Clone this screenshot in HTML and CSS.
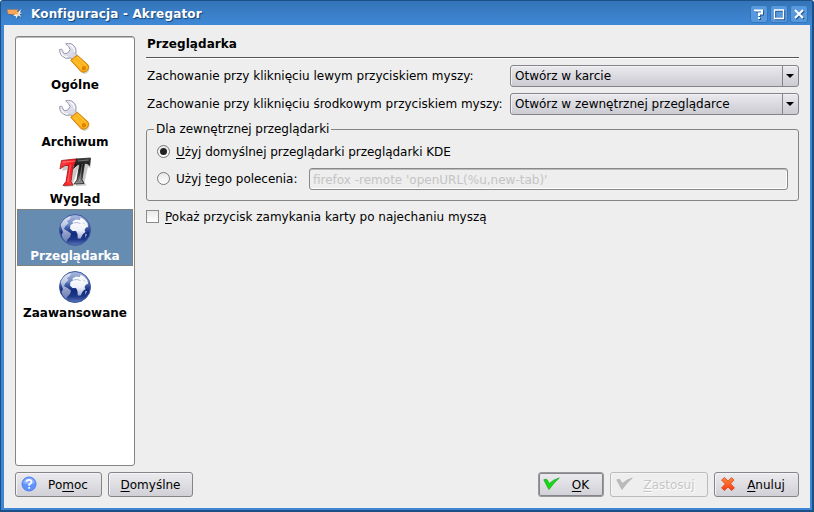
FILE: index.html
```
<!DOCTYPE html>
<html lang="pl">
<head>
<meta charset="utf-8">
<title>Konfiguracja - Akregator</title>
<link rel="stylesheet" href="styles.css">
</head>
<body>
<svg class="defs" width="0" height="0" aria-hidden="true">
  <defs>
    <linearGradient id="gold" x1="0" y1="1" x2="1" y2="0"><stop offset="0" stop-color="#f08a00"/><stop offset=".5" stop-color="#ffb820"/><stop offset="1" stop-color="#f09000"/></linearGradient>
    <linearGradient id="steel" x1="0" y1="0" x2="1" y2="1"><stop offset="0" stop-color="#f4f4fa"/><stop offset="1" stop-color="#c9cad9"/></linearGradient>
    <linearGradient id="sea" x1="0" y1="0" x2="0" y2="1"><stop offset="0" stop-color="#a4b4de"/><stop offset=".4" stop-color="#4a68b0"/><stop offset=".6" stop-color="#122a7c"/><stop offset=".8" stop-color="#1c3888"/><stop offset="1" stop-color="#5c78bb"/></linearGradient>
    <linearGradient id="land" x1="0" y1="0" x2="0" y2="1"><stop offset="0" stop-color="#fff"/><stop offset=".6" stop-color="#eef1fa"/><stop offset="1" stop-color="#9dabd4"/></linearGradient>
    <linearGradient id="red" x1="0" y1="0" x2="1" y2="1"><stop offset="0" stop-color="#ff5050"/><stop offset=".5" stop-color="#fa1820"/><stop offset="1" stop-color="#ff5a5a"/></linearGradient>
    <linearGradient id="black" x1="0" y1="0" x2="0" y2="1"><stop offset="0" stop-color="#444"/><stop offset=".3" stop-color="#111"/><stop offset=".6" stop-color="#333"/><stop offset="1" stop-color="#999"/></linearGradient>
    <linearGradient id="cross" x1="0" y1="0" x2="0" y2="1"><stop offset="0" stop-color="#ff8a3c"/><stop offset="1" stop-color="#fa3a10"/></linearGradient>
    <symbol id="wrench" viewBox="1 1 31.500 31.500">
      <path d="M15 19 20 14.500 30.500 24.500Q32 27 30 29.500 27 32.500 24.500 31Z" fill="#999" opacity=".4"/>
      <path d="M7.500 1.800Q10 .8 13 1.800 17.500 4 17.800 8.500L17.500 12 20.500 15 16 18.500 12.500 15.800Q7.500 17.500 3.500 13.500 1.500 11 1.500 7.500L3.500 7 6 11.500 9.500 11 12 7.500 10.500 4.500Z" fill="url(#steel)" stroke="#9090a6" stroke-width=".9"/>
      <path d="M3 10Q5 15 10 14.800M12 3Q16 5 16.300 10" fill="none" stroke="#fff" stroke-width="1"/>
      <path d="M12.500 18 19 13 29.500 22.500Q31.300 25 29 28 26.500 30.500 23 29.500Z" fill="url(#gold)" stroke="#c97800" stroke-width=".9"/>
      <path d="M15.500 18 24 27M19 15 27.500 23" stroke="#ffc840" stroke-width="1"/>
      <circle cx="25.500" cy="25.800" r="1.700" fill="#e58a00" stroke="#c26c00" stroke-width=".6"/>
    </symbol>
    <symbol id="fonts" viewBox="0 0 32 32">
      <path d="M3.500 6 20 5 19 12 14 26 15.500 29 5 30 8 25 11 12 3.500 14ZM20 5 32 4 31.500 11 29 10 25.500 25 27.500 28.500 17 29Z" fill="#666" opacity=".35"/>
      <path d="M2.500 3.500 18 1.800 16.800 9.500 14.300 7.500 12 24.500 14 28 4 28.500 7 24.500 9.700 8.500 6 8.500 1 12Z" fill="url(#red)" stroke="#a01010" stroke-width=".8"/>
      <path d="M17.500 2 31.500 1 30.500 8.500 28 6.500 25.500 6.500 23 22.500 25 26.500 15 27 18 23 20.700 7.500 18 8 14.500 11.500Z" fill="url(#black)" stroke="#222" stroke-width=".8"/>
      <path d="M4 5.200 16.500 4M11.500 8 8.800 25M19 4 29.500 3M23.300 7 20.500 24" stroke="#fff" stroke-width=".8" opacity=".4"/>
    </symbol>
    <symbol id="globe" viewBox="0 0 32 32">
      <circle cx="16" cy="16" r="15.500" fill="url(#sea)" stroke="#3f5a9c" stroke-width="1"/>
      <path d="M1.500 11Q4 5 9 3L12 2.500 11 5 8 7 9.500 9 6.500 12 5 15 8.500 17 12 19.500 11 23 8 26 7.500 28Q4 26 2.500 21L4 18Z" fill="url(#land)" opacity=".6"/>
      <path d="M13.500 7.500 17 5.500 21 6 21.500 3.800 25 5.500 28.500 9.500 29 13 27 13.500 25.500 16 26.500 18 24 20 21.500 24.500 18.800 24.500 18.500 20 17 17 13.500 17 11 14.500 11.500 11 14 9.500Z" fill="url(#land)"/>
      <path d="M14.500 9 18 8.500 21.500 9.500M24 8.500 26 10.500" stroke="#a3b3da" stroke-width="1" fill="none"/>
      <path d="M26.500 19.500 28 20.500 26 24Z" fill="#b0bce0"/>
      <path d="M2 11Q6 1.500 16 1.300 26 1.500 30 11 22 15 16 13 8 12 2 11Z" fill="#fff" opacity=".12"/>
    </symbol>
    <symbol id="check" viewBox="0 0 17 14">
      <path d="M.8 2.800 3.700 2.300 6.300 6.500Q10 2.700 16.300 1 11 5.300 6 12.500L4.800 10.500Z"/>
    </symbol>
  </defs>
</svg>
<div class="window">
  <header class="titlebar">
    <svg class="app-icon" width="16" height="12" viewBox="0 0 16 12">
      <path d="M0 1.500 11 1.500 9.500 7 1 6Z" fill="#f38a2c"/><path d="M1 3 10 3M1.500 5 8 5" stroke="#ffc890" stroke-width=".9"/>
      <path d="M10 4 11 4 14.500 1 13 4.500 15.500 5 12.500 6 14.500 9 11 7.500 9.500 10.500 8.500 8 6 8 8 6.500Z" fill="#eeeae2"/>
      <path d="M8 4 12 4.500 10 7Z" fill="#f7a850"/>
    </svg>
    <h1 class="title">Konfiguracja - Akregator</h1>
    <div class="controls">
      <svg class="control" width="18" height="18" viewBox="0 0 16 16"><g class="glyph"><path d="M4 5V4.500H11V7.500H8V10M8 11V13"/></g></svg>
      <svg class="control" width="18" height="18" viewBox="0 0 16 16"><g class="glyph thin"><path d="M3.500 4H12.500V12.500H3.500Z"/></g></svg>
      <svg class="control" width="18" height="18" viewBox="0 0 16 16"><g class="glyph"><path d="M4 4 12 12M12 4 4 12"/></g></svg>
    </div>
  </header>
  <main class="body">
    <div class="content">
      <nav class="sidebar">
        <div class="item"><svg class="pic"><use href="#wrench"/></svg><span>Ogólne</span></div>
        <div class="item"><svg class="pic"><use href="#wrench"/></svg><span>Archiwum</span></div>
        <div class="item"><svg class="pic"><use href="#fonts"/></svg><span>Wygląd</span></div>
        <div class="item selected"><svg class="pic"><use href="#globe"/></svg><span>Przeglądarka</span></div>
        <div class="item"><svg class="pic"><use href="#globe"/></svg><span>Zaawansowane</span></div>
      </nav>
      <section class="page">
        <h2 class="heading">Przeglądarka</h2>
        <div class="row"><span class="label">Zachowanie przy kliknięciu lewym przyciskiem myszy:</span><div class="combo"><span class="value">Otwórz w karcie</span><span class="drop"></span></div></div>
        <div class="row"><span class="label">Zachowanie przy kliknięciu środkowym przyciskiem myszy:</span><div class="combo"><span class="value">Otwórz w zewnętrznej przeglądarce</span><span class="drop"></span></div></div>
        <fieldset class="group">
          <legend>Dla zewnętrznej przeglądarki</legend>
          <div class="option"><span class="radio on"></span><span class="default-label"><u>U</u>żyj domyślnej przeglądarki przeglądarki KDE</span></div>
          <div class="option second"><span class="radio"></span><span class="command-label">Użyj <u>t</u>ego polecenia:</span><div class="field">firefox -remote 'openURL(%u,new-tab)'</div></div>
        </fieldset>
        <div class="check-row"><span class="checkbox"></span><span><u>P</u>okaż przycisk zamykania karty po najechaniu myszą</span></div>
      </section>
    </div>
    <footer class="buttons">
      <div class="button help"><svg width="16" height="16" viewBox="0 0 16 16"><circle cx="8" cy="8" r="7" fill="#5f92fa" stroke="#4f80ee"/><path d="M2 7Q3 2 8 2T14 7Q8 10 2 7" fill="#a9c6ff" opacity=".6"/><path d="M5.500 6Q5.500 3.800 8 3.800T10.500 6Q10.500 7.200 8.200 8.500V9.700M8.200 11V12.800" fill="none" stroke="#fff" stroke-width="1.800"/></svg><span>Po<u>m</u>oc</span></div>
      <div class="button defaults"><span><u>D</u>omyślne</span></div>
      <div class="button ok"><svg width="17" height="14" fill="#12dc12" stroke="#16a016" stroke-width=".7"><use href="#check"/></svg><span><u>O</u>K</span></div>
      <div class="button apply"><svg width="17" height="14" fill="#bbb" stroke="#aaa" stroke-width=".6"><use href="#check"/></svg><span><u>Z</u>astosuj</span></div>
      <div class="button cancel"><svg width="16" height="16" viewBox="0 0 16 16"><path d="M1.500 4 4.500 1.500 8 5 11.500 1.500 14 4 10.700 7.700 14.500 12 11.500 14.500 8 11 4.500 14.500 1.500 12 5.300 8Z" fill="url(#cross)" stroke="#d83810" stroke-width=".7"/></svg><span><u>A</u>nuluj</span></div>
    </footer>
  </main>
</div>
</body>
</html>
```
FILE: styles.css
```
* { box-sizing: border-box; }
body { margin: 0; background: #fff; color: #000; font: 12px/16px "DejaVu Sans", sans-serif; white-space: nowrap; overflow: hidden; }
.defs { display: block; height: 0; }
.window { width: 814px; height: 512px; display: flex; flex-direction: column; background: #3f87d4; border: 1px solid #1c4f86; border-right-width: 2px; border-bottom-width: 2px; border-radius: 3px 3px 0 0; padding: 0 2px 2px 3px; }
.titlebar { height: 24px; flex: none; display: flex; align-items: center; margin: 0 -2px 0 -3px; padding: 0 4px 0 6px; background: linear-gradient(#3474b8, #3f88d6); border-radius: 2px 2px 0 0; }
.app-icon { margin-top: 1px; filter: drop-shadow(1px 1px 0 #2868ac); }
.title { margin: 2px 0 0 8px; font-size: 12px; letter-spacing: .16px; line-height: 16px; color: #fff; text-shadow: 1px 1px 1px #184478; }
.controls { margin: 2px 0 0 auto; display: flex; gap: 2px; }
.control { width: 18px; height: 18px; border: 1px solid #3474b8; border-radius: 3px; background: #5898dc; }
.glyph { fill: none; stroke: #fff; stroke-width: 2; filter: drop-shadow(1px 1px 0 #1f5592); }
.glyph.thin { stroke-width: 1.3; }
.body { flex: 1; display: flex; flex-direction: column; background: #eee; padding: 11px 11px 0; }
.content { display: flex; height: 430px; }
.sidebar { width: 120px; flex: none; background: #fff; border: 1px solid #858585; border-radius: 3px; padding: 1px; box-shadow: inset 0 1px #bbb; }
.item { height: 57px; padding: 5px 0 0; display: flex; flex-direction: column; align-items: center; font-weight: bold; }
.pic { width: 32px; height: 32px; margin-bottom: 2px; }
.selected { background: #678cb2; color: #fff; outline: 1px dotted #98734d; outline-offset: -1px; }
.page { flex: 1; margin-left: 11px; }
.heading { height: 22px; margin: 0 0 7px; padding-left: 1px; font-size: 12px; letter-spacing: .05px; line-height: 16px; border-bottom: 1px solid #555; box-shadow: 0 1px #fff; }
.row { display: flex; align-items: center; justify-content: space-between; height: 22px; margin-bottom: 6px; padding-left: 1px; }
.combo { width: 289px; height: 22px; border: 1px solid #858589; border-radius: 3px; display: flex; background: linear-gradient(#eaeaee, #cbcbd2); box-shadow: inset 1px 1px #f3f3f6; }
.value { flex: 1; padding: 2px 4px; }
.drop { width: 16px; border-left: 1px solid #858589; display: flex; align-items: center; justify-content: center; }
.drop::after { content: ""; border: 4px solid transparent; border-top-color: #000; border-bottom: 0; margin-right: 1px; }
.group { height: 80px; min-width: 0; margin: 0; padding: 0 10px; border: 1px solid #858585; border-radius: 3px; }
.group legend { height: 16px; padding: 0 2px; margin-left: -3px; letter-spacing: -.06px; }
.option { display: flex; align-items: center; height: 22px; margin-top: 4px; }
.option.second { margin-top: 5px; }
.radio { width: 13px; height: 13px; flex: none; border: 1px solid #777; border-radius: 50%; margin: 0 6px 1px 0; background: linear-gradient(#e8e8ea, #fff); display: flex; align-items: center; justify-content: center; }
.on::after { content: ""; width: 7px; height: 7px; border-radius: 50%; background: #222; }
.default-label { letter-spacing: -.04px; }
.command-label { width: 133px; letter-spacing: -.04px; }
.field { flex: 1; height: 22px; padding: 3px 3px; color: #c4c4c4; border: 1px solid #888; border-radius: 3px; box-shadow: inset 0 1px #bbb, inset -1px -1px #fff; }
.check-row { display: flex; align-items: center; height: 16px; margin-top: 8px; }
.checkbox { width: 13px; height: 13px; margin: 0 6px 1px 0; border: 1px solid #8a8a8a; background: linear-gradient(#e9e9eb, #fff); }
u { text-decoration: underline; text-underline-offset: 2px; text-decoration-thickness: 1px; text-decoration-skip-ink: none; }
.buttons { display: flex; gap: 6px; margin-top: 6px; }
.button { height: 25px; display: flex; align-items: center; border: 1px solid #858589; border-radius: 3px; background: linear-gradient(#ebebef, #d0d0d6); box-shadow: inset 1px 1px #f5f5f7; padding: 0 2px 0 5px; }
.button svg { margin-bottom: 1px; }
.button span { flex: 1; text-align: center; }
.help { width: 87px; }
.defaults { width: 85px; padding: 0; }
.ok { width: 66px; margin-left: auto; padding-left: 4px; border-color: #999; box-shadow: inset 0 0 0 1px #85858a; }
.apply { width: 98px; color: #c6c6c6; background: #eee; border-color: #bbb; text-shadow: 1px 1px #fff; }
.cancel { width: 85px; }
```
